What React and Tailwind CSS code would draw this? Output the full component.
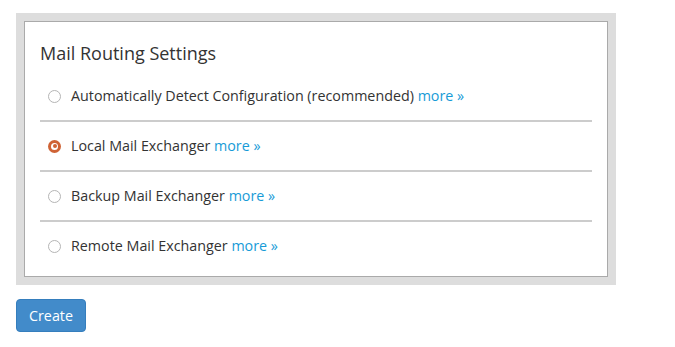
const options = [
  { label: 'Automatically Detect Configuration (recommended)', checked: false },
  { label: 'Local Mail Exchanger', checked: true },
  { label: 'Backup Mail Exchanger', checked: false },
  { label: 'Remote Mail Exchanger', checked: false },
]

function Radio({ checked }) {
  if (checked) {
    return (
      <span className="w-[13px] h-[13px] rounded-full bg-[#cf6335] flex items-center justify-center shrink-0">
        <span className="w-[7px] h-[7px] rounded-full bg-white flex items-center justify-center">
          <span className="w-[4px] h-[4px] rounded-full bg-[#cf6335]" />
        </span>
      </span>
    )
  }
  return <span className="w-[13px] h-[13px] rounded-full border border-[#b5b5b5] bg-white shrink-0" />
}

export default function App() {
  return (
    <div className="bg-white min-h-screen pt-[13px] px-4 font-['Open_Sans',sans-serif] text-[#333]">
      <div className="w-[600px] bg-[#dddddd] p-2">
        <div className="bg-white border border-[#aaaaaa] px-[15px] pt-[18px] pb-[6px]">
          <h2 className="text-[18px] leading-[26px] font-normal mb-[6px]">Mail Routing Settings</h2>
          <div>
            {options.map((opt, i) => (
              <div key={opt.label}>
                {i > 0 && <div className="h-[2px] bg-[#cccccc]" />}
                <label className="flex items-center h-[48px] pl-2 gap-[10px] text-[14.3px]">
                  <Radio checked={opt.checked} />
                  <span>
                    {opt.label} <a href="#" className="text-[#179bd7]">more »</a>
                  </span>
                </label>
              </div>
            ))}
          </div>
        </div>
      </div>
      <button className="mt-[14px] h-[33px] px-[12px] rounded-[4px] bg-[#428bca] border border-[#357ebd] text-white text-[14.3px]">
        Create
      </button>
    </div>
  )
}
